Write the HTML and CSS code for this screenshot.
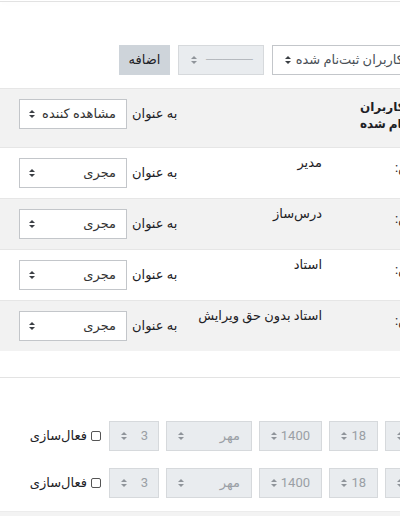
FILE: index.html
```html
<!DOCTYPE html>
<html lang="fa" dir="rtl">
  <head>
    <meta charset="utf-8">
    <title>نگاشت نقش‌ها</title>
    <link rel="stylesheet" href="styles.css">
  </head>
  <body>

  <div class="page">

    <div class="topline"></div>

    <div class="add-row">
      <span class="select select--users"><span class="val">کاربران ثبت‌نام شده</span><span class="caret"></span></span>
      <span class="select select--off select--dash"><span class="val dash">--------------------</span><span class="caret"></span></span>
      <span class="btn">اضافه</span>
    </div>

    <div class="roles">
      <div class="role-row">
        <div class="role-label role-label--head">کاربران<br>ثبت‌نام شده</div>
        <div class="role-name"></div>
        <div class="role-as"><span>به عنوان</span><span class="select select--role"><span class="val">مشاهده کننده</span><span class="caret"></span></span></div>
      </div>
      <div class="role-row">
        <div class="role-label">نقش:</div>
        <div class="role-name">مدیر</div>
        <div class="role-as"><span>به عنوان</span><span class="select select--role"><span class="val">مجری</span><span class="caret"></span></span></div>
      </div>
      <div class="role-row">
        <div class="role-label">نقش:</div>
        <div class="role-name">درس‌ساز</div>
        <div class="role-as"><span>به عنوان</span><span class="select select--role"><span class="val">مجری</span><span class="caret"></span></span></div>
      </div>
      <div class="role-row">
        <div class="role-label">نقش:</div>
        <div class="role-name">استاد</div>
        <div class="role-as"><span>به عنوان</span><span class="select select--role"><span class="val">مجری</span><span class="caret"></span></span></div>
      </div>
      <div class="role-row">
        <div class="role-label">نقش:</div>
        <div class="role-name">استاد بدون حق ویرایش</div>
        <div class="role-as"><span>به عنوان</span><span class="select select--role"><span class="val">مجری</span><span class="caret"></span></span></div>
      </div>
    </div>

    <div class="divider"></div>

    <div class="dates">
      <div class="date-row">
        <span class="select select--off w-day"><span class="val">3</span><span class="caret"></span></span>
        <span class="select select--off w-hour"><span class="val">18</span><span class="caret"></span></span>
        <span class="select select--off w-year"><span class="val">1400</span><span class="caret"></span></span>
        <span class="select select--off w-month"><span class="val">مهر</span><span class="caret"></span></span>
        <span class="select select--off w-min"><span class="val">3</span><span class="caret"></span></span>
        <label class="check"><span class="box"></span>فعال‌سازی</label>
      </div>
      <div class="date-row">
        <span class="select select--off w-day"><span class="val">3</span><span class="caret"></span></span>
        <span class="select select--off w-hour"><span class="val">18</span><span class="caret"></span></span>
        <span class="select select--off w-year"><span class="val">1400</span><span class="caret"></span></span>
        <span class="select select--off w-month"><span class="val">مهر</span><span class="caret"></span></span>
        <span class="select select--off w-min"><span class="val">3</span><span class="caret"></span></span>
        <label class="check"><span class="box"></span>فعال‌سازی</label>
      </div>
    </div>

    <div class="bottom-band"></div>

  </div>

  </body>
</html>
```

FILE: styles.css
```css
html, body {
  margin: 0;
  padding: 0;
  background: #fff;
  overflow: hidden;
}

body {
  direction: ltr;
  font-family: Roboto, "DejaVu Sans", sans-serif;
  font-size: 13px;
  line-height: 19.5px;
  color: #1d2125;
}

.page {
  width: 520px;
  direction: rtl;
}

.topline {
  margin-top: 1px;
  height: 1px;
  background: #e2e2e2;
  box-shadow: 0 2px 5px rgba(0,0,0,0.03);
}

/* select look-alikes */
.select {
  box-sizing: border-box;
  height: 30px;
  padding: 0 11px;
  display: flex;
  align-items: center;
  justify-content: space-between;
  background: #fff;
  border: 1px solid #c3c6ca;
  color: #495057;
  white-space: nowrap;
  flex: none;
}

.select--off {
  background: #e9ecef;
  border-color: #d6d9dc;
  color: #9a9fa5;
}

.caret {
  display: flex;
  flex-direction: column;
  gap: 2px;
  color: #3b3f44;
}
.select--off .caret {
  color: #8f949a;
}
.caret::before,
.caret::after {
  content: "";
  display: block;
  border-left: 3px solid transparent;
  border-right: 3px solid transparent;
}
.caret::before {
  border-bottom: 3.5px solid currentColor;
}
.caret::after {
  border-top: 3.5px solid currentColor;
}

.add-row {
  display: flex;
  justify-content: flex-end;
  gap: 8px;
  padding: 43px 0 0 119px;
  margin-bottom: 13px;
}

.select--users {
  width: 150px;
  padding-left: 12px;
  padding-right: 18px;
}
.select--dash {
  width: 86px;
  padding-left: 12px;
}
.dash {
  color: #b5b9be;
  letter-spacing: -1px;
  font-size: 12px;
}

.btn {
  width: 51px;
  height: 30px;
  display: flex;
  align-items: center;
  justify-content: center;
  background: #ced4da;
  color: #1d2125;
  font-size: 13px;
}

/* role table */
.role-row {
  display: grid;
  grid-template-columns: 185px 145px 1fr;
  border-top: 1px solid #e6e6e6;
  padding: 10px 0;
}
.role-row:nth-child(odd) {
  background: #f2f2f2;
}

.role-label {
  text-align: left;
  padding-left: 60px;
  white-space: nowrap;
  overflow: hidden;
}
.role-label--head {
  padding-left: 25px;
  padding-bottom: 4px;
  font-size: 12px;
  line-height: 17px;
  font-weight: bold;
}

.role-name {
  padding-right: 13px;
  margin-top: -5px;
  white-space: nowrap;
}

.role-as {
  display: flex;
  justify-content: flex-end;
  align-items: flex-start;
  gap: 5px;
  padding-left: 19px;
  line-height: 30px;
}

.select--role {
  width: 108px;
  padding: 0 10px 0 9px;
  color: #333;
}

.divider {
  margin-top: 26px;
  height: 1px;
  background: #e3e3e3;
}

/* date selectors */
.dates {
  display: flex;
  flex-direction: column;
  gap: 17px;
  padding-top: 43px;
}

.date-row {
  display: flex;
  justify-content: flex-end;
  align-items: center;
  gap: 7px;
  padding-left: 37px;
}

.w-day { width: 50px; }
.w-hour { width: 49px; }
.w-year { width: 63px; }
.w-month { width: 86px; }
.w-min { width: 50px; padding-right: 10px; }

.check {
  box-sizing: border-box;
  width: 64px;
  margin-right: 1px;
  display: flex;
  align-items: center;
  gap: 4px;
  white-space: nowrap;
  color: #1d2125;
}
.box {
  width: 10px;
  height: 10px;
  box-sizing: border-box;
  border: 1px solid #555;
  border-radius: 2px;
  background: #fff;
  flex: none;
}

.bottom-band {
  margin-top: 13px;
  height: 8px;
  background: #f3f3f3;
  border-top: 1px solid #ececec;
}
```
